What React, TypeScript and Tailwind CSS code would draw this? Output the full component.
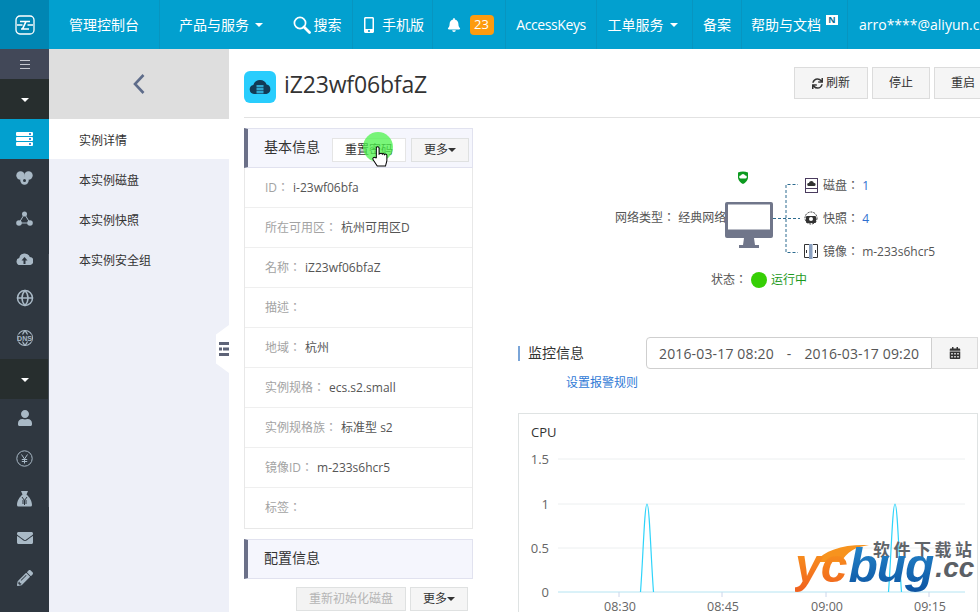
import { Globe } from "lucide-react";
import {
  FaBell,
  FaCalendarAlt,
  FaEnvelope,
  FaMobileAlt,
  FaPencilAlt,
  FaSync,
  FaUser,
} from "react-icons/fa";

const Caret = ({ className = "" }: { className?: string }) => (
  <span
    className={`inline-block w-0 h-0 border-x-[4px] border-x-transparent border-t-[4px] border-t-current ${className}`}
  />
);

const Logo = () => (
  <svg width="20" height="20" viewBox="0 0 20 20" fill="none" stroke="white" strokeWidth="1.300">
    <rect x="1" y="1" width="18" height="18" rx="4" />
    <path d="M5 6.500h10M2 10h5.500M12.500 10H18M6 14h8M11 6.500L7.500 14" strokeWidth="1.700" />
  </svg>
);

const SearchIcon = () => (
  <svg className="mr-[-2px]" width="18" height="18" viewBox="0 0 18 18" fill="none" stroke="white">
    <circle cx="7" cy="7" r="5.600" strokeWidth="1.700" />
    <path d="M11 11l5.500 5.500" strokeWidth="2.800" strokeLinecap="round" />
  </svg>
);

const CloudBadge = () => (
  <div className="w-[32px] h-[32px] mt-[8px] rounded-[6px] bg-[#29cdfd] flex items-center justify-center">
    <svg width="24" height="18" viewBox="0 0 24 18">
      <path d="M6 16a4.500 4.500 0 0 1-.7-8.900A7 7 0 0 1 18.600 6.600 4.800 4.800 0 0 1 18.500 16z" fill="#123a55" />
      <rect x="8.500" y="7" width="7" height="2.400" fill="#2fa6cf" />
      <rect x="8.500" y="10" width="7" height="2.400" fill="#2fa6cf" />
      <rect x="8.500" y="13" width="7" height="2.400" fill="#2fa6cf" />
    </svg>
  </div>
);

const NavCell = ({
  w,
  border = true,
  children,
}: {
  w: string;
  border?: boolean;
  children: React.ReactNode;
}) => (
  <div className={`${w} shrink-0 h-full flex items-center justify-center gap-[5px] ${border ? "border-r border-[#0795c0]" : ""}`}>
    {children}
  </div>
);

const TopNav = () => (
  <header className="h-[49px] shrink-0 flex bg-[#02a0cf] text-white text-[14px] whitespace-nowrap overflow-hidden">
    <div className="w-[49px] shrink-0 bg-[#0086b3] flex items-center justify-center">
      <Logo />
    </div>
    <NavCell w="w-[111px]">管理控制台</NavCell>
    <NavCell w="w-[122px]" border={false}>
      产品与服务
      <Caret className="ml-[1px]" />
    </NavCell>
    <NavCell w="w-[71px]">
      <SearchIcon />
      搜索
    </NavCell>
    <NavCell w="w-[80px]">
      <FaMobileAlt className="text-[16px]" />
      手机版
    </NavCell>
    <NavCell w="w-[73px]">
      <FaBell className="text-[14px] ml-[2px] mr-[4px]" />
      <span className="w-[24px] h-[20px] rounded-[4px] bg-[#fd9b0e] text-[13px] flex items-center justify-center">23</span>
    </NavCell>
    <NavCell w="w-[91px]">
      <span className="tracking-[-0.4px]">AccessKeys</span>
    </NavCell>
    <NavCell w="w-[96px]">
      工单服务
      <Caret className="ml-[1px] mr-[4px]" />
    </NavCell>
    <NavCell w="w-[49px]">备案</NavCell>
    <NavCell w="w-[106px]">
      <span className="relative pr-[17px]">
        帮助与文档
        <span className="absolute right-0 top-[1px] w-[12px] h-[10px] bg-white text-[#0b6f95] text-[9px] leading-[10px] font-bold text-center">N</span>
      </span>
    </NavCell>
    <div className="pl-[11px] h-full flex items-center">arro****@aliyun.com</div>
  </header>
);

const YenCircle = () => (
  <svg width="17" height="17" viewBox="0 0 17 17" fill="none" stroke="#a9b9c6" strokeWidth="1">
    <circle cx="8.500" cy="8.500" r="7.700" />
    <path d="M5.500 4.500L8.500 9l3-4.500M8.500 9v4.500M5.800 9.500h5.400M5.800 11.500h5.400" />
  </svg>
);

const MoneyBag = () => (
  <svg width="17" height="17" viewBox="0 0 17 17">
    <path d="M5 1h7l-1.500 3.500C13.500 7 16 11 16 15q0 1.500-1.500 1.500h-12Q1 16.500 1 15C1 11 3.500 7 6.500 4.500z" fill="#a9b9c6" />
    <path d="M6 7l2.500 3.500L11 7M8.500 10.500V15M6 11h5M6 13h5" stroke="#2f3740" strokeWidth="1" fill="none" />
  </svg>
);

const DarkIcon = ({ children }: { children: React.ReactNode }) => (
  <div className="relative h-[40px] flex items-center justify-center text-[16px] text-[#a9b9c6]">{children}</div>
);

const Fold = () => (
  <div className="h-[40px] pt-[2px] bg-[#272e2e] flex items-center justify-center text-white">
    <Caret />
  </div>
);

const ServerBar = () => (
  <span className="w-[17px] h-[4px] rounded-[1px] bg-white flex justify-end items-center pr-[2px]">
    <span className="w-[2px] h-[2px] bg-[#3f8fd8]" />
  </span>
);

const IconRail = () => (
  <aside className="w-[49px] shrink-0 bg-[#2f3740] relative overflow-hidden">
    <div className="h-[30px] bg-[#424858] flex flex-col items-center justify-center gap-[3px]">
      <span className="w-[10px] h-px bg-[#c5c8d0]" />
      <span className="w-[10px] h-px bg-[#c5c8d0]" />
      <span className="w-[10px] h-px bg-[#c5c8d0]" />
    </div>
    <Fold />
    <div className="h-[40px] bg-[#02a0cf] flex flex-col items-center justify-center gap-[1px]">
      <ServerBar />
      <ServerBar />
      <ServerBar />
    </div>
    <div className="mt-[-1px] mb-[1px]">
      <DarkIcon>
        <svg width="17" height="14" viewBox="0 0 17 14" fill="#a9b9c6">
          <circle cx="4.500" cy="4.500" r="4.200" />
          <circle cx="12.500" cy="4.500" r="4.200" />
          <circle cx="8.500" cy="9.500" r="4.200" />
          <circle cx="8.500" cy="9.500" r="1.500" fill="#2f3740" />
        </svg>
      </DarkIcon>
      <DarkIcon>
        <svg width="17" height="15" viewBox="0 0 17 15" fill="#a9b9c6" stroke="#a9b9c6">
          <path d="M8.500 3L3 12h11z" fill="none" />
          <circle cx="8.500" cy="3" r="2.500" stroke="none" />
          <circle cx="3" cy="12" r="2.800" stroke="none" />
          <circle cx="14" cy="12" r="2.800" stroke="none" />
        </svg>
      </DarkIcon>
      <DarkIcon>
        <svg width="17" height="13" viewBox="0 0 17 13">
          <path d="M4 13a3.500 3.500 0 0 1-.8-6.900A5.500 5.500 0 0 1 13.800 5 4 4 0 0 1 13 13z" fill="#a9b9c6" />
          <path d="M8.500 5l3 3.500H9.500V12h-2V8.500h-2z" fill="#2f3740" />
        </svg>
      </DarkIcon>
      <DarkIcon>
        <Globe size={18} strokeWidth={2} />
      </DarkIcon>
      <DarkIcon>
        <Globe size={18} strokeWidth={1.5} />
        <span className="absolute left-1/2 top-1/2 -translate-x-1/2 -translate-y-1/2 bg-[#2f3740] text-[7px] leading-[7px] font-bold font-['Liberation_Sans',sans-serif]">DNS</span>
      </DarkIcon>
    </div>
    <Fold />
    <div className="mt-[-1px]">
      <DarkIcon>
        <FaUser />
      </DarkIcon>
      <DarkIcon>
        <YenCircle />
      </DarkIcon>
      <DarkIcon>
        <MoneyBag />
      </DarkIcon>
      <DarkIcon>
        <FaEnvelope />
      </DarkIcon>
      <DarkIcon>
        <FaPencilAlt />
      </DarkIcon>
    </div>
    <span className="absolute right-0 top-[205px] w-px h-[253px] bg-[#454d56]" />
  </aside>
);

const subItems = ["实例详情", "本实例磁盘", "本实例快照", "本实例安全组"];

const SubNav = () => (
  <aside className="w-[180px] shrink-0 bg-[#eef0f8] relative text-[12px] text-[#333]">
    <div className="h-[70px] bg-[#dedede] flex items-center justify-center">
      <svg width="14" height="22" viewBox="0 0 14 22" fill="none" stroke="#5e6c8a" strokeWidth="2.600">
        <path d="M11.500 2L3 11l8.500 9" />
      </svg>
    </div>
    {subItems.map((item, i) => (
      <div key={item} className={`h-[40px] pl-[30px] pt-[3px] flex items-center ${i === 0 ? "bg-white" : ""}`}>
        {item}
      </div>
    ))}
    <div className="absolute right-0 top-[276px] w-[13px] h-[48px] bg-white [clip-path:polygon(100%_0,100%_100%,0_80%,0_20%)] flex items-center justify-end">
      <svg width="10" height="14" viewBox="0 0 10 14" fill="#5d6377">
        <rect x="0" y="0" width="10" height="3" />
        <rect x="0" y="5.500" width="3" height="3" />
        <rect x="4" y="5.500" width="6" height="3" />
        <rect x="0" y="11" width="10" height="3" />
      </svg>
    </div>
  </aside>
);

const Btn = ({
  w,
  children,
  tone = "normal",
}: {
  w: string;
  children: React.ReactNode;
  tone?: "normal" | "plain" | "disabled";
}) => (
  <div
    className={`${w} h-[24px] border flex items-center justify-center text-[12px] shrink-0 ${
      tone === "disabled"
        ? "bg-[#f3f3f3] border-[#dfe1e1] text-[#b5b5b5]"
        : tone === "plain"
          ? "bg-white border-[#e5e5e5] text-[#333]"
          : "bg-[#f5f5f5] border-[#dfe1e1] text-[#333]"
    }`}
  >
    {children}
  </div>
);

const infoRows: [string, string][] = [
  ["ID：", "i-23wf06bfa"],
  ["所在可用区：", "杭州可用区D"],
  ["名称：", "iZ23wf06bfaZ"],
  ["描述：", ""],
  ["地域：", "杭州"],
  ["实例规格：", "ecs.s2.small"],
  ["实例规格族：", "标准型 s2"],
  ["镜像ID：", "m-233s6hcr5"],
  ["标签：", ""],
];

const Panel = ({ title, children }: { title: string; children?: React.ReactNode }) => (
  <div className="h-[40px] bg-[#f5f6fd] border border-[#e1e2ef] border-l-[4px] border-l-[#6b7088] pl-[16px] flex items-center text-[14px] text-[#333]">
    <span className="shrink-0 whitespace-nowrap mb-[3px]">{title}</span>
    {children}
  </div>
);

const LeftColumn = () => (
  <div className="w-[229px] shrink-0">
    <Panel title="基本信息">
      <div className="relative ml-[12px] mt-[4px] shrink-0">
        <Btn w="w-[74px]" tone="plain">
          重置密码
        </Btn>
        <span className="absolute left-[31px] top-[-6px] w-[30px] h-[30px] rounded-full bg-[#4cf34c]/75" />
        <svg className="absolute left-[39px] top-[7px]" width="18" height="22" viewBox="0 0 18 24" fill="white" stroke="black" strokeWidth="1.100">
          <path d="M5 14V3.500a1.500 1.500 0 0 1 3 0V10l1-.5a1.400 1.400 0 0 1 2.500.5 1.400 1.400 0 0 1 2.500.5 1.400 1.400 0 0 1 2.500 1V17l-1.500 6H6l-4.500-7c-1-1.500 1-3.500 2.500-2z" />
        </svg>
      </div>
      <div className="ml-[5px] mt-[4px] shrink-0">
        <Btn w="w-[58px]">
          更多
          <Caret />
        </Btn>
      </div>
    </Panel>
    <div className="border-x border-b border-[#e8e8e8] text-[12px]">
      {infoRows.map(([label, value], i) => (
        <div key={label} className={`h-[40px] pl-[20px] flex items-center gap-[4px] ${i < infoRows.length - 1 ? "border-b border-[#efefef]" : ""}`}>
          <span className="text-[#a3a3a3] font-['Open_Sans','Noto_Sans_CJK_TC',sans-serif]">{label}</span>
          <span className="text-[#555]">{value}</span>
        </div>
      ))}
    </div>
    <div className="mt-[10px]">
      <Panel title="配置信息" />
    </div>
    <div className="mt-[8px] pr-[5px] flex justify-end gap-[4px]">
      <Btn w="w-[110px]" tone="disabled">
        重新初始化磁盘
      </Btn>
      <Btn w="w-[58px]">
        更多
        <Caret />
      </Btn>
    </div>
  </div>
);

const Shield = () => (
  <svg width="12" height="13" viewBox="0 0 12 13">
    <path d="M1 1.500Q6 -.5 11 1.500V7Q10 11 6 13Q2 11 1 7z" fill="#0c9a1f" />
    <path d="M3.500 7.500a1.500 1.500 0 0 1 .4-3 2.200 2.200 0 0 1 4.200 0 1.500 1.500 0 0 1 .4 3z" fill="white" />
  </svg>
);

const Monitor = () => (
  <svg width="48" height="46" viewBox="0 0 48 46">
    <rect width="48" height="36" rx="2" fill="#70768a" />
    <rect x="3" y="2.500" width="42" height="25" fill="white" />
    <path d="M19 36h10l1 7h4v3H14v-3h4z" fill="#70768a" />
  </svg>
);

const Connector = () => (
  <svg className="shrink-0" width="27" height="70" viewBox="0 0 27 70" fill="none" stroke="#2d6b8f" strokeWidth="1" strokeDasharray="3 2">
    <path d="M0 34.500h27M13 34V.5h12M13 35v33.500h12" />
  </svg>
);

const DiskIcon = () => (
  <svg width="13" height="15" viewBox="0 0 13 15" fill="none" stroke="#4a3b5e">
    <rect x=".5" y=".5" width="12" height="14" />
    <path d="M1 10.500h11" />
    <path d="M3.500 8a1.500 1.500 0 0 1 .4-3 2.600 2.600 0 0 1 5 0 1.500 1.500 0 0 1 .4 3z" fill="#333" stroke="none" />
  </svg>
);

const SnapIcon = () => (
  <svg width="14" height="14" viewBox="0 0 14 14">
    <circle cx="7" cy="7" r="6" fill="none" stroke="#333" strokeDasharray="2 1" />
    <rect x="2" y="5" width="10" height="7" rx="1" fill="#333" />
    <circle cx="7" cy="8" r="2" fill="white" />
  </svg>
);

const ImageIcon = () => (
  <svg width="14" height="15" viewBox="0 0 14 15" fill="none" stroke="#333">
    <path d="M5 .5H.5v13H5M9 .5h4.500v13H9" />
    <path d="M2.500 6v3M11.500 6v3" />
    <rect x="5" y="0" width="3.500" height="15" fill="#8aa0c0" stroke="none" />
  </svg>
);

const Colon = () => <span className="font-['Noto_Sans_CJK_TC',sans-serif]">：</span>;

const Topology = () => (
  <div className="h-[183px] text-[12px] text-[#555]">
    <div className="flex items-center h-[100px] mt-[41px] pl-[97px]">
      <div className="w-[110px] shrink-0 whitespace-nowrap overflow-hidden mt-[-4px]">
        网络类型<Colon /> 经典网络
      </div>
      <div className="w-[48px] shrink-0 flex flex-col items-center mt-[-19px]">
        <span className="mb-[18px] mr-[12px] block leading-[0]">
          <Shield />
        </span>
        <Monitor />
      </div>
      <Connector />
      <div className="flex flex-col gap-[16px] ml-[4px] mt-[-2px]">
        <div className="h-[17px] flex items-center gap-[5px]">
          <span className="w-[14px] flex justify-center"><DiskIcon /></span>
          <span>磁盘<Colon /> <span className="text-[#2f6fd0]">1</span></span>
        </div>
        <div className="h-[17px] flex items-center gap-[5px]">
          <span className="w-[14px] flex justify-center"><SnapIcon /></span>
          <span>快照<Colon /> <span className="text-[#2f6fd0]">4</span></span>
        </div>
        <div className="h-[17px] flex items-center gap-[5px]">
          <span className="w-[14px] flex justify-center"><ImageIcon /></span>
          <span>镜像<Colon /> m-233s6hcr5</span>
        </div>
      </div>
    </div>
    <div className="mt-[1px] pl-[193px] flex items-center gap-[4px]">
      <span>状态<Colon /></span>
      <span className="w-[16px] h-[16px] rounded-full bg-[#36cf05]" />
      <span className="text-[#1d9a1d]">运行中</span>
    </div>
  </div>
);

const ticks = [
  { x: 619, label: "08:30" },
  { x: 722, label: "08:45" },
  { x: 826, label: "09:00" },
  { x: 929, label: "09:15" },
];
const levels = [
  { y: 459, label: "1.5" },
  { y: 504, label: "1" },
  { y: 548, label: "0.5" },
  { y: 592, label: "0" },
];

const Chart = () => (
  <div className="mt-[21px] w-[460px] h-[230px] border border-[#dfe3e3] shrink-0">
    <div className="pl-[12px] pt-[9px] text-[13px] text-[#333] leading-[18px]">CPU</div>
    {/* plot coordinates stay in page pixels, viewBox shifts them */}
    <svg className="block" width="458" height="190" viewBox="519 441 458 190">
      {levels.map((l) => (
        <g key={l.label}>
          <line x1="558" x2="965" y1={l.y} y2={l.y} stroke={l.y === 592 ? "#b5e4f2" : "#eceff0"} />
          <text x="549" y={l.y + 5} textAnchor="end" fontSize="13" fill="#666">
            {l.label}
          </text>
        </g>
      ))}
      {ticks.map((t) => (
        <g key={t.label}>
          <line x1={t.x} x2={t.x} y1="592" y2="597" stroke="#ccd6eb" />
          <text x={t.x + 1} y="611" textAnchor="middle" fontSize="12.500" fill="#666">
            {t.label}
          </text>
        </g>
      ))}
      <path
        d="M640.500 592C643 560 644.500 504 647 504C649.500 504 651 560 653.500 592M888.500 592C891 560 892.500 504 895 504C897.500 504 899 560 901.500 592"
        fill="none"
        stroke="#2fd4fa"
        strokeWidth="1.200"
      />
    </svg>
  </div>
);

const RightColumn = () => (
  <div className="ml-[45px] w-[462px] shrink-0 flex flex-col">
    <Topology />
    <div className="mt-[26px] h-[32px] flex items-center">
      <div className="w-[128px] h-[15px] border-l-[2px] border-[#7aa5d8] pl-[8px] flex items-center text-[14px] text-[#333] shrink-0">
        <span className="mb-[2px]">监控信息</span>
      </div>
      <div className="w-[286px] h-[32px] border border-[#cfcfcf] rounded-l-[4px] flex items-center pl-[12px] text-[14px] tracking-[0.15px] text-[#555] shrink-0 whitespace-nowrap">
        <span>2016-03-17 08:20</span>
        <span className="mx-[13px]">-</span>
        <span>2016-03-17 09:20</span>
      </div>
      <div className="w-[46px] h-[32px] border-y border-r border-[#dcdcdc] bg-[#f5f5f5] flex items-center justify-center text-[#333] text-[12px] shrink-0">
        <FaCalendarAlt />
      </div>
    </div>
    <div className="mt-[5px] pl-[48px] text-[12px] text-[#2f7ad6] leading-[18px]">设置报警规则</div>
    <Chart />
  </div>
);

const Watermark = () => (
  <div className="absolute left-[795px] top-[541px] w-[185px] h-[71px] pointer-events-none">
    <svg className="absolute left-[20px] top-[3px]" width="54" height="18" viewBox="0 0 54 18">
      <path d="M0 18C10 6 28 0 54 1 40 3 32 8 26 18z" fill="#f7931e" />
    </svg>
    <div className="absolute left-[78px] top-[-4px] text-[17px] font-bold text-[#5f6469] whitespace-nowrap tracking-[3.5px]">软件下载站</div>
    <div className="absolute left-0 top-[-5px] flex items-baseline whitespace-nowrap font-['Liberation_Sans',sans-serif] font-bold italic leading-[60px]">
      <span className="text-[48px] tracking-[-1px] bg-gradient-to-b from-[#f9a11b] to-[#ef5a1f] bg-clip-text text-transparent pr-[2px]">yc</span>
      <span className="text-[48px] tracking-[-1px] bg-gradient-to-b from-[#2a8fd2] to-[#0b4f9e] bg-clip-text text-transparent pr-[2px]">bug</span>
      <span className="relative top-[-5px] text-[28px] text-[#5b6066]">.cc</span>
    </div>
  </div>
);

const App = () => {
  return (
    <div className="relative w-[980px] h-[612px] overflow-hidden bg-white flex flex-col font-['Open_Sans','Noto_Sans_CJK_SC',sans-serif]">
      <TopNav />
      <div className="flex-1 flex min-h-0">
        <IconRail />
        <SubNav />
        <main className="flex-1 min-w-0 pl-[15px]">
          <div className="h-[69px] border-b border-[#e2e2e2] flex items-center">
            <CloudBadge />
            <h1 className="ml-[8px] mt-[2px] text-[23px] tracking-[-0.15px] text-[#333] leading-none">iZ23wf06bfaZ</h1>
            <div className="ml-auto flex gap-[4px] mr-[-12px] text-[12px] text-[#333]">
              <div className="w-[74px] h-[32px] border border-[#dcdcdc] bg-[#f5f5f5] flex items-center justify-center gap-[3px]">
                <FaSync className="text-[11px]" />
                刷新
              </div>
              <div className="w-[58px] h-[32px] border border-[#dcdcdc] bg-[#f5f5f5] flex items-center justify-center">停止</div>
              <div className="w-[58px] h-[32px] border border-[#dcdcdc] bg-[#f5f5f5] flex items-center justify-center">重启</div>
            </div>
          </div>
          <div className="mt-[10px] flex">
            <LeftColumn />
            <RightColumn />
          </div>
        </main>
      </div>
      <Watermark />
    </div>
  );
};

export default App;
